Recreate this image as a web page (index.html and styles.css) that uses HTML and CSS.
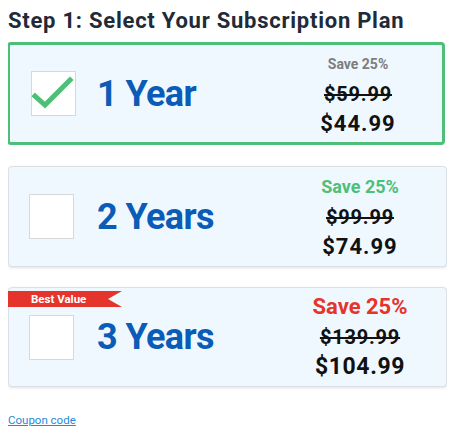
FILE: index.html
```html
<!DOCTYPE html>
<html>
<head>
<meta charset="utf-8">
<link rel="stylesheet" href="styles.css">
</head>
<body>
<h1 class="title">Step 1: Select Your Subscription Plan</h1>
<div class="plans">
  <div class="card selected">
    <div class="box">
      <svg class="check" width="45" height="45" viewBox="0 0 45 45"><path d="M4 25 L14 34 L39 9" fill="none" stroke="#4cbf78" stroke-width="5" stroke-linecap="square"/></svg>
    </div>
    <div class="label">1 Year</div>
    <div class="prices">
      <div class="save save-1">Save 25%</div>
      <div class="old old-s">$59.99</div>
      <div class="now now-s">$44.99</div>
    </div>
  </div>
  <div class="card">
    <div class="box"></div>
    <div class="label">2 Years</div>
    <div class="prices">
      <div class="save save-2">Save 25%</div>
      <div class="old old-s">$99.99</div>
      <div class="now now-s">$74.99</div>
    </div>
  </div>
  <div class="card last">
    <div class="ribbon">Best Value</div>
    <div class="box"></div>
    <div class="label">3 Years</div>
    <div class="prices">
      <div class="save save-3">Save 25%</div>
      <div class="old old-l">$139.99</div>
      <div class="now now-l">$104.99</div>
    </div>
  </div>
</div>
<div class="footer"><a class="coupon" href="#">Coupon code</a></div>
</body>
</html>
```
FILE: styles.css
```css
html, body { background: #ffffff; }
body {
  margin: 8px 2px 0 8px;
  font-family: Roboto, "Liberation Sans", Arial, sans-serif;
}
.title {
  margin: 0;
  font-size: 22px;
  line-height: 30px;
  font-weight: 700;
  color: #1f2b38;
  margin-top: -2px;
  letter-spacing: 0.75px;
}
.plans {
  margin-top: 6px;
}
.card {
  position: relative;
  display: flex;
  align-items: center;
  height: 99px;
  background: #f0f8ff;
  border: 1px solid #dcdfe3;
  border-radius: 4px;
  box-shadow: 0 1px 3px rgba(0,0,0,0.12);
  padding-left: 20px;
  margin-bottom: 20px;
}
.card.selected {
  height: 97px;
  border: 3px solid #4cbf78;
  margin-left: -1px;
  margin-right: 2px;
  margin-bottom: 21px;
  padding-left: 21px;
  box-shadow: none;
}
.card.last { height: 98px; margin-bottom: 0; }
.box {
  width: 43px;
  height: 43px;
  background: #ffffff;
  border: 1px solid #d6d9dc;
  flex: none;
  position: relative;
}
.check {
  position: absolute;
  left: -1px;
  top: -1px;
}
.label {
  margin-left: 23px;
  font-size: 36px;
  font-weight: 700;
  color: #0b5cb6;
  letter-spacing: -0.6px;
  flex: 1;
}
.selected .label { margin-left: 21px; }
.prices {
  width: 130px;
  margin-right: 21px;
  text-align: center;
  display: flex;
  flex-direction: column;
}
.selected .prices { margin-right: 19px; }
.prices > div { line-height: 30px; font-weight: 700; }
.save-1 { font-size: 14px; color: #7d7d7d; }
.save-2 { font-size: 18px; color: #4cbf78; }
.save-3 { font-size: 22px; color: #e5342b; }
.old { text-decoration: line-through; color: #111; }
.now { color: #111; }
.old-s { font-size: 20px; letter-spacing: 0.8px; }
.now-s { font-size: 22px; letter-spacing: 1px; }
.old-l { font-size: 20px; letter-spacing: 0.8px; }
.now-l { font-size: 23px; letter-spacing: 0.6px; }
.ribbon {
  position: absolute;
  left: -1px;
  top: 3px;
  width: 91px;
  height: 16px;
  padding-left: 23px;
  background: #e5342b;
  color: #ffffff;
  font-size: 11.5px;
  font-weight: 700;
  line-height: 16px;
  clip-path: polygon(0 0, 100% 0, calc(100% - 14px) 50%, 100% 100%, 0 100%);
}
.footer {
  margin-top: 26px;
  font-size: 11.5px;
  line-height: 14px;
}
.coupon {
  color: #1f8ad9;
  text-decoration: underline;
}
```
